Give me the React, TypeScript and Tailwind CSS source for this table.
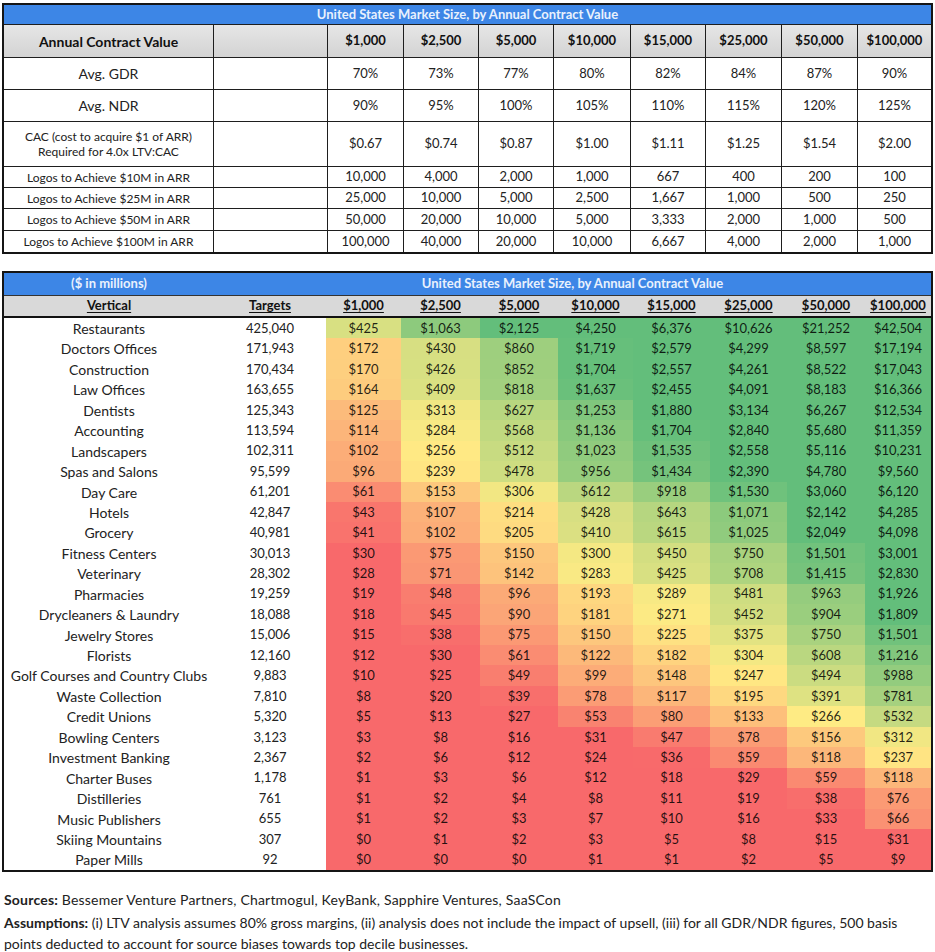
import React from "react";

const acv = ["$1,000", "$2,500", "$5,000", "$10,000", "$15,000", "$25,000", "$50,000", "$100,000"];

const topRows: { label: React.ReactNode; values: string[]; h: string; small?: boolean }[] = [
  { label: "Avg. GDR", values: ["70%", "73%", "77%", "80%", "82%", "84%", "87%", "90%"], h: "h-[31px]" },
  { label: "Avg. NDR", values: ["90%", "95%", "100%", "105%", "110%", "115%", "120%", "125%"], h: "h-[31px]" },
  {
    label: (
      <>
        CAC (cost to acquire $1 of ARR)
        <br />
        Required for 4.0x LTV:CAC
      </>
    ),
    values: ["$0.67", "$0.74", "$0.87", "$1.00", "$1.11", "$1.25", "$1.54", "$2.00"],
    h: "h-[44px]",
    small: true,
  },
  { label: "Logos to Achieve $10M in ARR", values: ["10,000", "4,000", "2,000", "1,000", "667", "400", "200", "100"], h: "h-[20px]", small: true },
  { label: "Logos to Achieve $25M in ARR", values: ["25,000", "10,000", "5,000", "2,500", "1,667", "1,000", "500", "250"], h: "h-[20px]", small: true },
  { label: "Logos to Achieve $50M in ARR", values: ["50,000", "20,000", "10,000", "5,000", "3,333", "2,000", "1,000", "500"], h: "h-[21px]", small: true },
  { label: "Logos to Achieve $100M in ARR", values: ["100,000", "40,000", "20,000", "10,000", "6,667", "4,000", "2,000", "1,000"], h: "h-[21px]", small: true },
];

const verticals: [string, string, number[]][] = [
  ["Restaurants", "425,040", [425, 1063, 2125, 4250, 6376, 10626, 21252, 42504]],
  ["Doctors Offices", "171,943", [172, 430, 860, 1719, 2579, 4299, 8597, 17194]],
  ["Construction", "170,434", [170, 426, 852, 1704, 2557, 4261, 8522, 17043]],
  ["Law Offices", "163,655", [164, 409, 818, 1637, 2455, 4091, 8183, 16366]],
  ["Dentists", "125,343", [125, 313, 627, 1253, 1880, 3134, 6267, 12534]],
  ["Accounting", "113,594", [114, 284, 568, 1136, 1704, 2840, 5680, 11359]],
  ["Landscapers", "102,311", [102, 256, 512, 1023, 1535, 2558, 5116, 10231]],
  ["Spas and Salons", "95,599", [96, 239, 478, 956, 1434, 2390, 4780, 9560]],
  ["Day Care", "61,201", [61, 153, 306, 612, 918, 1530, 3060, 6120]],
  ["Hotels", "42,847", [43, 107, 214, 428, 643, 1071, 2142, 4285]],
  ["Grocery", "40,981", [41, 102, 205, 410, 615, 1025, 2049, 4098]],
  ["Fitness Centers", "30,013", [30, 75, 150, 300, 450, 750, 1501, 3001]],
  ["Veterinary", "28,302", [28, 71, 142, 283, 425, 708, 1415, 2830]],
  ["Pharmacies", "19,259", [19, 48, 96, 193, 289, 481, 963, 1926]],
  ["Drycleaners & Laundry", "18,088", [18, 45, 90, 181, 271, 452, 904, 1809]],
  ["Jewelry Stores", "15,006", [15, 38, 75, 150, 225, 375, 750, 1501]],
  ["Florists", "12,160", [12, 30, 61, 122, 182, 304, 608, 1216]],
  ["Golf Courses and Country Clubs", "9,883", [10, 25, 49, 99, 148, 247, 494, 988]],
  ["Waste Collection", "7,810", [8, 20, 39, 78, 117, 195, 391, 781]],
  ["Credit Unions", "5,320", [5, 13, 27, 53, 80, 133, 266, 532]],
  ["Bowling Centers", "3,123", [3, 8, 16, 31, 47, 78, 156, 312]],
  ["Investment Banking", "2,367", [2, 6, 12, 24, 36, 59, 118, 237]],
  ["Charter Buses", "1,178", [1, 3, 6, 12, 18, 29, 59, 118]],
  ["Distilleries", "761", [1, 2, 4, 8, 11, 19, 38, 76]],
  ["Music Publishers", "655", [1, 2, 3, 7, 10, 16, 33, 66]],
  ["Skiing Mountains", "307", [0, 1, 2, 3, 5, 8, 15, 31]],
  ["Paper Mills", "92", [0, 0, 0, 1, 1, 2, 5, 9]],
];

// red -> yellow -> green scale on a log axis, roughly what the sheet's conditional format shows
const RED = [248, 105, 107];
const YELLOW = [255, 235, 132];
const GREEN = [99, 190, 123];

function mix(a: number[], b: number[], t: number) {
  const c = a.map((v, i) => Math.round(v + (b[i] - v) * t));
  return `rgb(${c[0]}, ${c[1]}, ${c[2]})`;
}

function heat(v: number) {
  const l = Math.log10(v + 1);
  if (l <= 2.42) {
    const t = Math.max(0, Math.min(1, (l - 1.56) / 0.86));
    return mix(RED, YELLOW, t);
  }
  const t = Math.max(0, Math.min(1, (l - 2.42) / 0.83));
  return mix(YELLOW, GREEN, t);
}

const money = (v: number) => "$" + v.toLocaleString("en-US");

function ContractTable() {
  return (
    <div className="mx-[2px] mt-[3px] grid grid-cols-[209px_113px_75px_74px_74px_76px_74px_75px_75px_1fr] gap-px border-2 border-[#151515] bg-[#1e1e1e] text-[#222]">
      <div className="col-span-10 flex h-[19px] items-center justify-center bg-[#3d86e6] text-[13px] font-bold text-[#e9f1fd]">
        United States Market Size, by Annual Contract Value
      </div>
      <div className="flex h-[32px] items-center justify-center bg-linear-to-b from-[#e6e6e6] to-[#d3d3d3] text-[14px] font-bold text-[#111]">
        Annual Contract Value
      </div>
      <div className="bg-linear-to-b from-[#e6e6e6] to-[#d3d3d3]" />
      {acv.map((c) => (
        <div
          key={c}
          className="flex items-center justify-center bg-linear-to-b from-[#e6e6e6] to-[#d3d3d3] text-[13px] font-bold text-[#111]"
        >
          {c}
        </div>
      ))}
      {topRows.map((r, i) => (
        <React.Fragment key={i}>
          <div
            className={`flex items-center justify-center bg-white text-center ${r.h} ${
              r.small ? "text-[12px] leading-[15px]" : "text-[14px]"
            }`}
          >
            {r.label}
          </div>
          <div className="bg-white" />
          {r.values.map((v, j) => (
            <div key={j} className="flex items-center justify-center bg-white text-[13px]">
              {v}
            </div>
          ))}
        </React.Fragment>
      ))}
    </div>
  );
}

function VerticalTable() {
  return (
    <div className="mx-[2px] mt-[17px] border-2 border-[#151515] text-[#222]">
      <div className="grid h-[23px] grid-cols-[210px_1fr] border-b border-[#333] bg-[#3d86e6] text-[13px] font-bold text-[#e9f1fd]">
        <div className="flex items-center justify-center">($ in millions)</div>
        <div className="flex items-center justify-center">United States Market Size, by Annual Contract Value</div>
      </div>
      <div className="grid h-[22px] grid-cols-[210px_112px_75px_79px_78px_75px_77px_77px_78px_1fr] border-b-2 border-[#111] bg-[#d9d9d9] text-[13px] font-bold text-[#111]">
        <div className="flex items-center justify-center">
          <span className="underline underline-offset-2">Vertical</span>
        </div>
        <div className="flex items-center justify-center">
          <span className="underline underline-offset-2">Targets</span>
        </div>
        {acv.map((c) => (
          <div key={c} className="flex items-center justify-center">
            <span className="underline underline-offset-2">{c}</span>
          </div>
        ))}
      </div>
      {verticals.map(([name, targets, vals]) => (
        <div
          key={name}
          className="grid h-[20.44px] grid-cols-[210px_112px_75px_79px_78px_75px_77px_77px_78px_1fr] text-[13px]"
        >
          <div className="flex items-center justify-center text-[14px]">{name}</div>
          <div className="flex items-center justify-center">{targets}</div>
          {vals.map((v, j) => (
            <div
              key={j}
              className="flex items-center justify-center text-black/85"
              style={{ backgroundColor: heat(v) }}
            >
              {money(v)}
            </div>
          ))}
        </div>
      ))}
    </div>
  );
}

export default function App() {
  return (
    <div className="min-h-[952px] w-[935px] bg-white font-[Lato,sans-serif]">
      <ContractTable />
      <VerticalTable />
      <div className="mt-[17px] px-[4px] text-[14px] leading-[21px] text-[#222]">
        <p className="tracking-[0.2px]">
          <span className="font-bold">Sources:</span> Bessemer Venture Partners, Chartmogul, KeyBank, Sapphire Ventures,
          SaaSCon
        </p>
        <p className="mt-[2px]">
          <span className="font-bold">Assumptions:</span> (i) LTV analysis assumes 80% gross margins, (ii) analysis does
          not include the impact of upsell, (iii) for all GDR/NDR figures, 500 basis
          <br />
          points deducted to account for source biases towards top decile businesses.
        </p>
      </div>
    </div>
  );
}
